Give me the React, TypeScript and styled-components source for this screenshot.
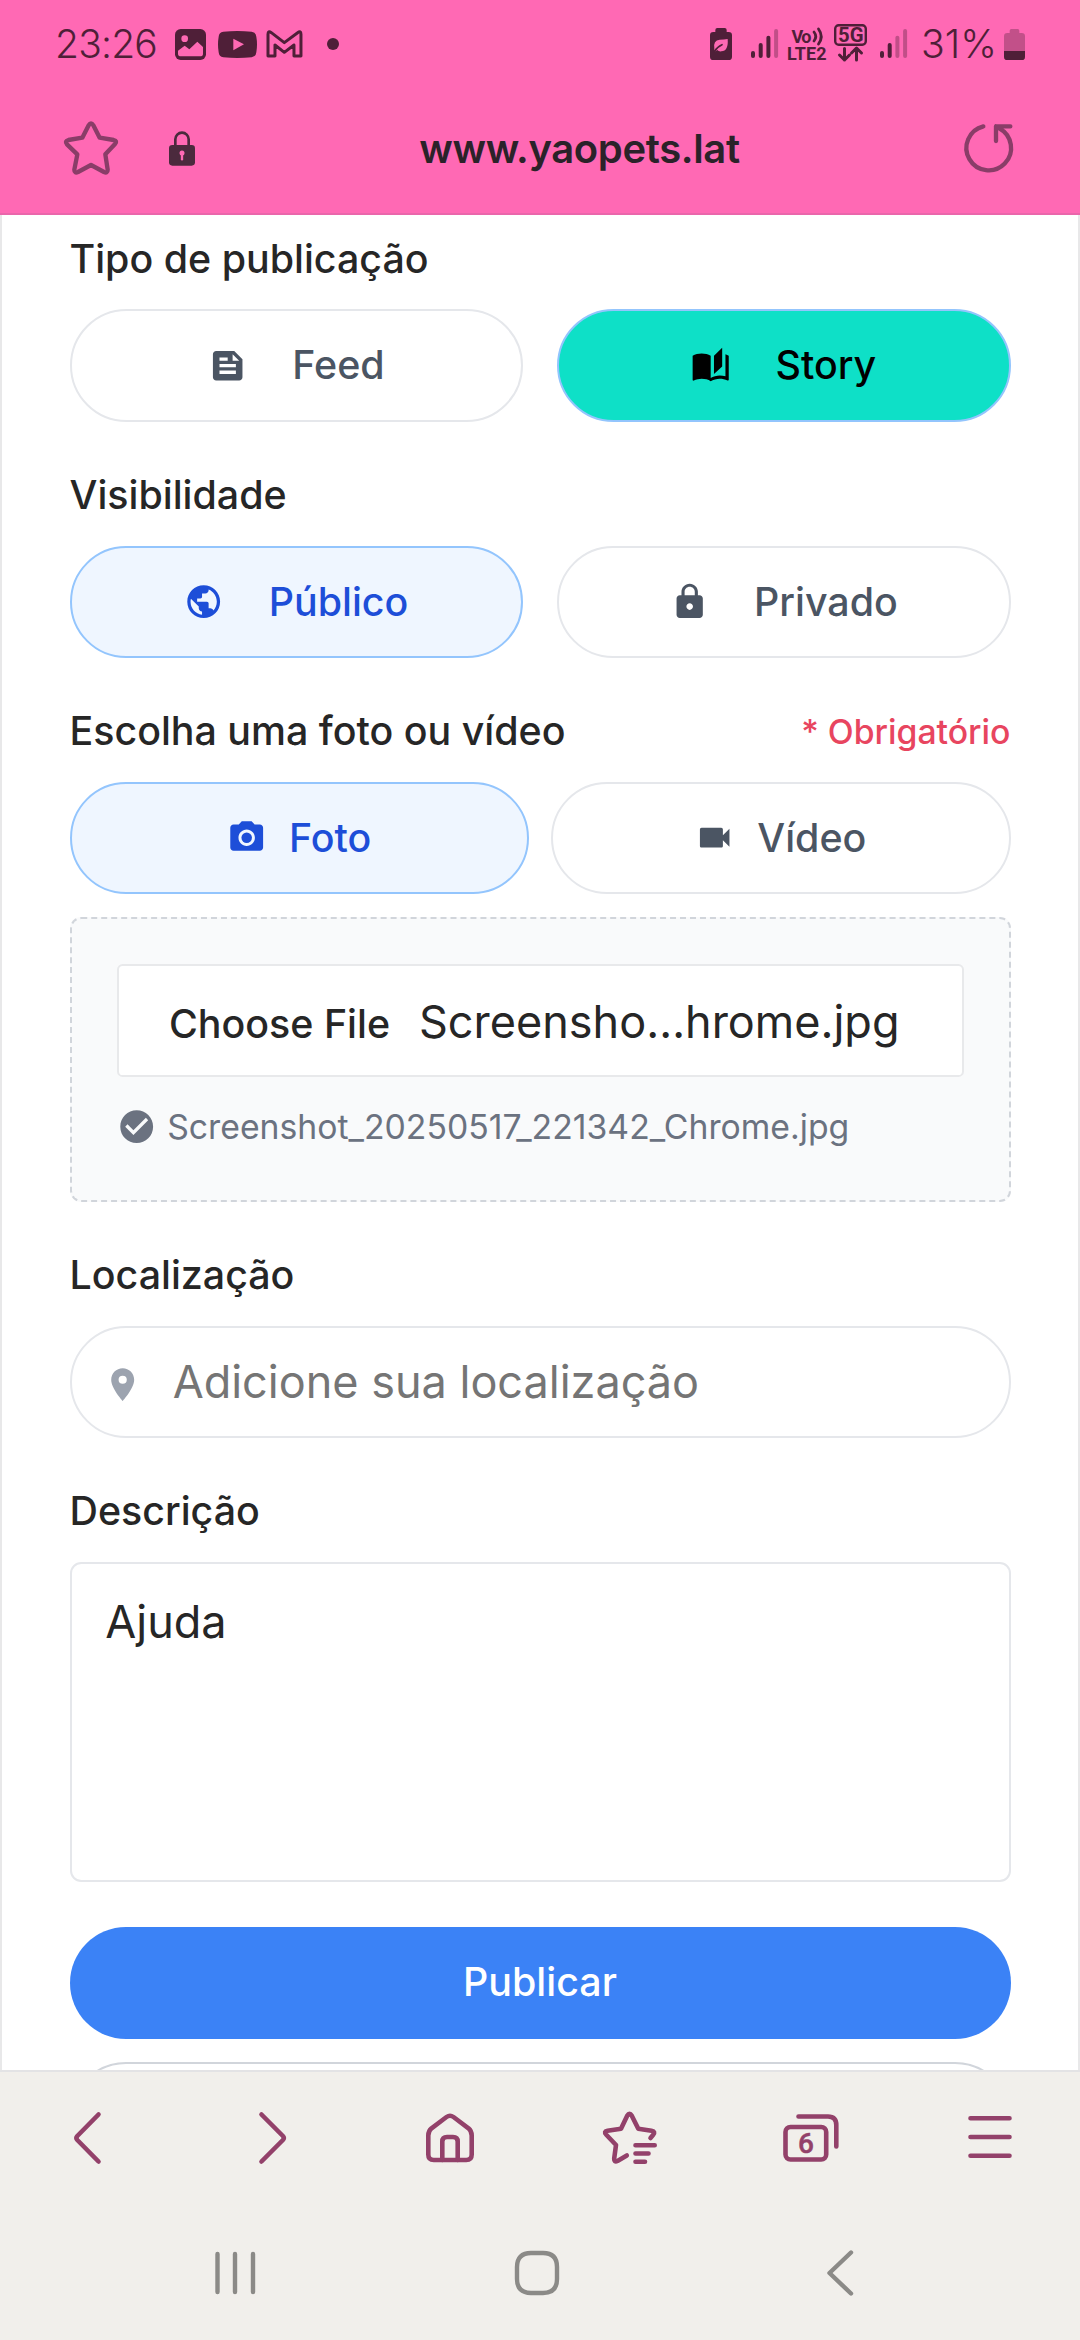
import React from "react";
import styled, { createGlobalStyle, css } from "styled-components";
import {
  MdAutoStories,
  MdCheckCircle,
  MdFeed,
  MdLocationOn,
  MdLock,
  MdPhotoCamera,
  MdPublic,
  MdVideocam,
} from "react-icons/md";

const GlobalStyle = createGlobalStyle`
  *, *::before, *::after { box-sizing: border-box; }
  body { margin: 0; background: #ffffff; }
`;

const sans = `"Inter", "Roboto", sans-serif`;

const Screen = styled.div`
  width: 1080px;
  height: 2340px;
  display: flex;
  flex-direction: column;
  overflow: hidden;
  background: #ffffff;
  color: #262626;
  font-family: ${sans};
`;

/* ---------- browser header ---------- */

const Header = styled.header`
  height: 215px;
  flex: none;
  background: #ff69b4;
  border-bottom: 2px solid #ea66ab;
`;

const StatusBar = styled.div`
  height: 88px;
  padding: 0 55px 0 55px;
  display: flex;
  align-items: center;
  justify-content: space-between;
  color: #4f1f38;
`;

const StatusGroup = styled.div`
  display: flex;
  align-items: center;
`;

const StatusText = styled.span<{ $width: number }>`
  width: ${(p) => p.$width}px;
  font-size: 39px;
  line-height: 44px;
  letter-spacing: -0.8px;
  font-weight: 350;
  white-space: nowrap;
`;

const Glyph = styled.svg<{ $ml?: number }>`
  display: block;
  flex: none;
  margin-left: ${(p) => p.$ml ?? 0}px;
  overflow: visible;
`;

const AddressBar = styled.div`
  height: 120px;
  padding: 0 64px 0 61px;
  display: flex;
  align-items: center;
`;

const Url = styled.div`
  flex: 1;
  padding-top: 2px;
  text-align: center;
  color: #2b2229;
  font-size: 40px;
  font-weight: 600;
  letter-spacing: -0.35px;
  line-height: 48px;
`;

/* ---------- form ---------- */

const Page = styled.main`
  flex: 1;
  min-height: 0;
  overflow: hidden;
  padding: 15.6px 67.5px 0;
  border: solid #e8e8e9;
  border-width: 0 2px;
  display: flex;
  flex-direction: column;
  gap: 45px;
`;

const Section = styled.section`
  flex: none;
  display: flex;
  flex-direction: column;
  gap: 22.5px;
`;

const LabelRow = styled.div`
  height: 56.25px;
  display: flex;
  align-items: center;
  justify-content: space-between;
`;

const Label = styled.label`
  font-size: 39.375px;
  line-height: 56.25px;
  font-weight: 500;
`;

const Required = styled.span`
  font-size: 33.75px;
  line-height: 45px;
  font-weight: 500;
  color: #e8455f;
`;

const Options = styled.div<{ $gap: number }>`
  display: grid;
  grid-template-columns: 1fr 1fr;
  gap: ${(p) => p.$gap}px;
`;

const tones = {
  plain: css`
    background: #ffffff;
    border-color: #e5e7eb;
    color: #4b5563;
  `,
  selected: css`
    background: #eff6ff;
    border-color: #93c5fd;
    color: #1d4ed8;
  `,
  story: css`
    background: #0ee0c7;
    border-color: #93c5fd;
    color: #000000;
  `,
};

const Option = styled.button<{ $tone: keyof typeof tones; $gap: number }>`
  height: 112.5px;
  padding: 0;
  display: flex;
  align-items: center;
  justify-content: center;
  gap: ${(p) => p.$gap}px;
  border: 2px solid;
  border-radius: 57px;
  font-family: inherit;
  font-size: 39.375px;
  line-height: 56.25px;
  font-weight: 500;
  ${(p) => tones[p.$tone]}

  svg {
    width: 39.375px;
    height: 39.375px;
  }
`;

const DropZone = styled.div`
  height: 285.25px;
  padding: 45.5px 45px 0;
  border: 2px dashed #d1d5db;
  border-radius: 11.25px;
  background: #f9fafb;
  display: flex;
  flex-direction: column;
  gap: 22.5px;
`;

const FileInput = styled.div`
  height: 112.5px;
  padding-left: 50.5px;
  display: flex;
  align-items: baseline;
  border: 2px solid #e8e9eb;
  border-radius: 5.6px;
  background: #ffffff;
  line-height: 111px;
`;

const FileButton = styled.span`
  width: 250px;
  font-size: 39.375px;
  font-weight: 500;
`;

const FileName = styled.span`
  font-size: 45px;
`;

const PickedFile = styled.div`
  height: 54px;
  display: flex;
  align-items: center;
  gap: 11.25px;
  color: #6b7280;
  font-size: 33.75px;
  line-height: 45px;

  svg {
    width: 39.375px;
    height: 39.375px;
  }
`;

const LocationInput = styled.div`
  height: 112.5px;
  padding-left: 31.75px;
  display: flex;
  align-items: center;
  gap: 30px;
  border: 2px solid #e5e7eb;
  border-radius: 57px;
  color: #757575;
  font-size: 45px;
  line-height: 67.5px;

  svg {
    width: 39.375px;
    height: 39.375px;
    margin-top: 6px;
    color: #9ca3af;
  }
`;

const Description = styled.div`
  height: 319.5px;
  padding: 24px 33.75px;
  border: 2px solid #e5e7eb;
  border-radius: 11.25px;
  font-size: 45px;
  line-height: 67.5px;
`;

const Publish = styled.button`
  height: 112.5px;
  padding: 0 0 2px;
  border: 0;
  border-radius: 57px;
  background: #3b82f6;
  color: #ffffff;
  font-family: inherit;
  font-size: 39.375px;
  font-weight: 500;
`;

const SecondaryAction = styled.div`
  height: 112.5px;
  border: 2px solid #d1d5db;
  border-radius: 57px;
`;

/* ---------- bottom bars ---------- */

const BottomBars = styled.footer`
  flex: none;
  height: 270px;
  border-top: 2px solid #e3e3e5;
  background: #f1efeb;
`;

const Toolbar = styled.nav`
  height: 132px;
  display: grid;
  grid-template-columns: repeat(6, 180px);
  place-items: center;
`;

const ToolIcon = styled.svg`
  display: block;
  fill: none;
  stroke: #93416a;
  stroke-width: 4.6;
  stroke-linecap: round;
  stroke-linejoin: round;
`;

const TabCount = styled.text`
  font: 500 28px "Roboto", sans-serif;
  fill: #93416a;
  stroke: #93416a;
  stroke-width: 0.5;
`;

const SystemNav = styled.nav`
  height: 136px;
  padding: 2px 89px 0 84px;
  display: grid;
  grid-template-columns: repeat(3, 1fr);
  place-items: center;
`;

const NavIcon = styled(ToolIcon)`
  stroke: #8b8a87;
  stroke-width: 4.4;
`;

const MiniText = styled.text<{ $size?: number }>`
  font: 700 ${(p) => p.$size ?? 18}px "Roboto", sans-serif;
  fill: #4f1f38;
`;

const STAR =
  "M83 19Q90 7 97 19L116 56L158 63Q170 66 162 75L133 106L140 152Q140 164 129 159L90 138L51 159Q40 164 40 152L49 106L18 76Q10 66 22 63L64 56Z";

function Signal({ strength, ml }: { strength: number; ml: number }) {
  const tops = [53, 45, 37.7, 31];
  return (
    <Glyph $ml={ml} width="28" height="32" viewBox="0 28 28 32" stroke="#4f1f38" strokeWidth="4" strokeLinecap="round">
      {tops.map((y, i) => (
        <line key={y} x1={2 + i * 7.7} x2={2 + i * 7.7} y1={y} y2={56} opacity={i < strength ? 1 : 0.35} />
      ))}
    </Glyph>
  );
}

function PhoneStatus() {
  return (
    <StatusBar>
      <StatusGroup>
        <StatusText $width={120}>23:26</StatusText>
        <Glyph width="31" height="31" viewBox="0 0 93 93">
          <rect width="93" height="93" rx="17" fill="#4f1f38" />
          <circle cx="29" cy="29" r="10" fill="#ff69b4" />
          <path d="M9 65L29 50L43 61L67 38L84 54V74Q84 82 75 82H18Q9 82 9 74Z" fill="#ff69b4" />
        </Glyph>
        <Glyph $ml={12} width="39" height="27" viewBox="0 0 117 81">
          <path d="M16 2Q58 -2 101 2Q114 4 115 17Q119 40 115 64Q114 77 101 79Q58 83 16 79Q3 77 2 64Q-2 40 2 17Q3 4 16 2Z" fill="#4f1f38" />
          <path d="M46 23V58L78 40Z" fill="#ff69b4" />
        </Glyph>
        <Glyph $ml={9} width="37.3" height="30" viewBox="0 0 112 90">
          <path d="M6 81V16Q6 4 16 11L55 41L95 11Q105 4 105 16V81H84V48L55 70L27 48V81Z" fill="none" stroke="#4f1f38" strokeWidth="9" strokeLinejoin="round" />
        </Glyph>
        <Glyph $ml={24} width="12" height="12" viewBox="0 0 12 12">
          <circle cx="6" cy="6" r="6" fill="#4f1f38" />
        </Glyph>
      </StatusGroup>
      <StatusGroup>
        <Glyph width="22" height="32" viewBox="0 0 66 96" fill="#4f1f38">
          <path d="M16 12V6Q16 0 22 0H44Q50 0 50 6V12H56Q66 12 66 22V86Q66 96 56 96H10Q0 96 0 86V22Q0 12 10 12Z" />
          <path d="M13 61Q9 37 29 35Q42 35 53 33Q56 69 34 70Q26 71 22 66L12 72Z" fill="#ff69b4" />
          <path d="M12 71Q22 56 36 50" fill="none" stroke="#4f1f38" strokeWidth="5" strokeLinecap="round" />
        </Glyph>
        <Signal strength={3} ml={19} />
        <Glyph $ml={8} width="40" height="36" viewBox="0 0 40 36">
          <MiniText x="4.5" y="16.5" textLength="20">Vo</MiniText>
          <path d="M27 6Q30.5 10.5 27 15M31.5 3Q37 10.5 31.5 18" fill="none" stroke="#4f1f38" strokeWidth="2.8" strokeLinecap="round" />
          <MiniText x="0" y="33.5" textLength="39.5">LTE2</MiniText>
        </Glyph>
        <Glyph $ml={7} width="33" height="40" viewBox="0 0 33 40" fill="none" stroke="#4f1f38">
          <rect x="1.2" y="1.2" width="30.6" height="19.6" rx="3.5" strokeWidth="2.4" />
          <MiniText $size={20} x="4" y="18.2" textLength="25.5" lengthAdjust="spacingAndGlyphs" stroke="none">5G</MiniText>
          <path d="M10.5 24.5V36M5.500 31L10.500 36L15.500 31M22.500 36V24.500M17.500 29L22.500 24L27.500 29" strokeWidth="3" strokeLinecap="round" strokeLinejoin="round" />
        </Glyph>
        <Signal strength={2} ml={13} />
        <Glyph $ml={13} width="80" height="40" viewBox="0 0 80 40">
          <text x="0" y="34" fontSize="39" fontWeight="350" fontFamily="Inter, sans-serif" textLength="76" lengthAdjust="spacingAndGlyphs" fill="#4f1f38">31%</text>
        </Glyph>
        <Glyph $ml={3} width="21" height="31" viewBox="0 0 63 93">
          <path d="M17 12V5Q17 0 22 0H41Q46 0 46 5V12H53Q63 12 63 22V83Q63 93 53 93H10Q0 93 0 83V22Q0 12 10 12Z" fill="#c25089" />
          <path d="M0 66H63V83Q63 93 53 93H10Q0 93 0 83Z" fill="#4f1f38" />
        </Glyph>
      </StatusGroup>
    </StatusBar>
  );
}

function BrowserAddress() {
  return (
    <AddressBar>
      <Glyph width="60" height="58" viewBox="0 0 180 174" fill="none" stroke="#8a3d68" strokeWidth="13" strokeLinejoin="round">
        <path d={STAR} />
      </Glyph>
      <Glyph $ml={46} width="30" height="38" viewBox="0 0 90 114">
        <path d="M25 52V31A20 20 0 0 1 65 31V52" fill="none" stroke="#4b2a3d" strokeWidth="8" />
        <rect x="6" y="48" width="78" height="62" rx="10" fill="#4b2a3d" />
        <path d="M45 73V91" stroke="#ff69b4" strokeWidth="7" strokeLinecap="round" />
        <circle cx="45" cy="72" r="7.5" fill="#ff69b4" />
      </Glyph>
      <Url>www.yaopets.lat</Url>
      <Glyph width="54" height="52" viewBox="0 0 162 156" fill="none" stroke="#8a3d68" strokeWidth="13" strokeLinecap="round" strokeLinejoin="round">
        <path d="M64 13A67 67 0 1 0 112 19L102 13M145 13H102V57" />
      </Glyph>
    </AddressBar>
  );
}

function BrowserToolbar() {
  return (
    <Toolbar>
      <ToolIcon width="60" height="60" viewBox="0 0 60 60">
        <path d="M38.5 6.5L17.3 28Q15.5 30 17.3 32L38.5 53.5" />
      </ToolIcon>
      <ToolIcon width="60" height="60" viewBox="0 0 60 60">
        <path d="M21.5 6.5L42.9 28Q44.7 30 42.9 32L21.5 53.5" />
      </ToolIcon>
      <ToolIcon width="60" height="60" viewBox="0 0 60 60">
        <path d="M8.3 46.5V27.5Q8.3 23 11.5 20.3L26.5 9Q30 6.5 33.5 9L48.5 20.3Q51.7 23 51.7 27.5V46.5Q51.7 52 46.2 52H13.8Q8.3 52 8.3 46.5Z" />
        <path d="M22.3 52V33.5Q22.3 29 27 29H33Q37.7 29 37.7 33.5V52" />
      </ToolIcon>
      <ToolIcon width="60" height="60" viewBox="0 0 60 60">
        <path d="M50.5 30L53 27Q56 23.5 51.5 22.7L38.3 20.7L31.8 7.8Q29.5 4 27.2 7.8L21 20.7L7.5 22.7Q3.3 23.5 6.3 26.7L16 37L14.2 50.5Q14 54.5 17.5 53L26.8 47.5" />
        <path d="M35.5 37.2H54.7M35.5 45.5H48.5M35.5 53.7H45" />
      </ToolIcon>
      <ToolIcon width="60" height="60" viewBox="0 0 60 60">
        <path d="M18.5 8.5H48Q56.3 8.5 56.3 17V38.5" />
        <rect x="5.5" y="19" width="40.7" height="32.5" rx="5" />
        <TabCount x="26" y="45.3" textAnchor="middle">6</TabCount>
      </ToolIcon>
      <ToolIcon width="60" height="60" viewBox="0 0 60 60">
        <path d="M10.5 10.3H49.5M10.5 29H49.5M10.5 47.7H49.5" />
      </ToolIcon>
    </Toolbar>
  );
}

function AndroidNav() {
  return (
    <SystemNav>
      <NavIcon width="50" height="50" viewBox="0 0 50 50">
        <path d="M7.5 6V44M25 6V44M43 6V44" />
      </NavIcon>
      <NavIcon width="50" height="50" viewBox="0 0 50 50">
        <path d="M19 5H31Q45 5 45 19V31Q45 45 31 45H19Q5 45 5 31V19Q5 5 19 5Z" />
      </NavIcon>
      <NavIcon width="50" height="50" viewBox="0 0 50 50">
        <path d="M36 4.5L14.5 25L36 45.5" />
      </NavIcon>
    </SystemNav>
  );
}

export default function App() {
  return (
    <Screen>
      <GlobalStyle />
      <Header>
        <PhoneStatus />
        <BrowserAddress />
      </Header>
      <Page>
        <Section>
          <Label>Tipo de publicação</Label>
          <Options $gap={33.75}>
            <Option $tone="plain" $gap={45}><MdFeed />Feed</Option>
            <Option $tone="story" $gap={45}><MdAutoStories />Story</Option>
          </Options>
        </Section>
        <Section>
          <Label>Visibilidade</Label>
          <Options $gap={33.75}>
            <Option $tone="selected" $gap={45}><MdPublic />Público</Option>
            <Option $tone="plain" $gap={45}><MdLock />Privado</Option>
          </Options>
        </Section>
        <Section>
          <LabelRow>
            <Label>Escolha uma foto ou vídeo</Label>
            <Required>* Obrigatório</Required>
          </LabelRow>
          <Options $gap={22.5}>
            <Option $tone="selected" $gap={22.5}><MdPhotoCamera />Foto</Option>
            <Option $tone="plain" $gap={22.5}><MdVideocam />Vídeo</Option>
          </Options>
          <DropZone>
            <FileInput>
              <FileButton>Choose File</FileButton>
              <FileName>Screensho…hrome.jpg</FileName>
            </FileInput>
            <PickedFile>
              <MdCheckCircle />
              Screenshot_20250517_221342_Chrome.jpg
            </PickedFile>
          </DropZone>
        </Section>
        <Section>
          <Label>Localização</Label>
          <LocationInput>
            <MdLocationOn />
            Adicione sua localização
          </LocationInput>
        </Section>
        <Section>
          <Label>Descrição</Label>
          <Description>Ajuda</Description>
        </Section>
        <Section>
          <Publish>Publicar</Publish>
          <SecondaryAction />
        </Section>
      </Page>
      <BottomBars>
        <BrowserToolbar />
        <AndroidNav />
      </BottomBars>
    </Screen>
  );
}
